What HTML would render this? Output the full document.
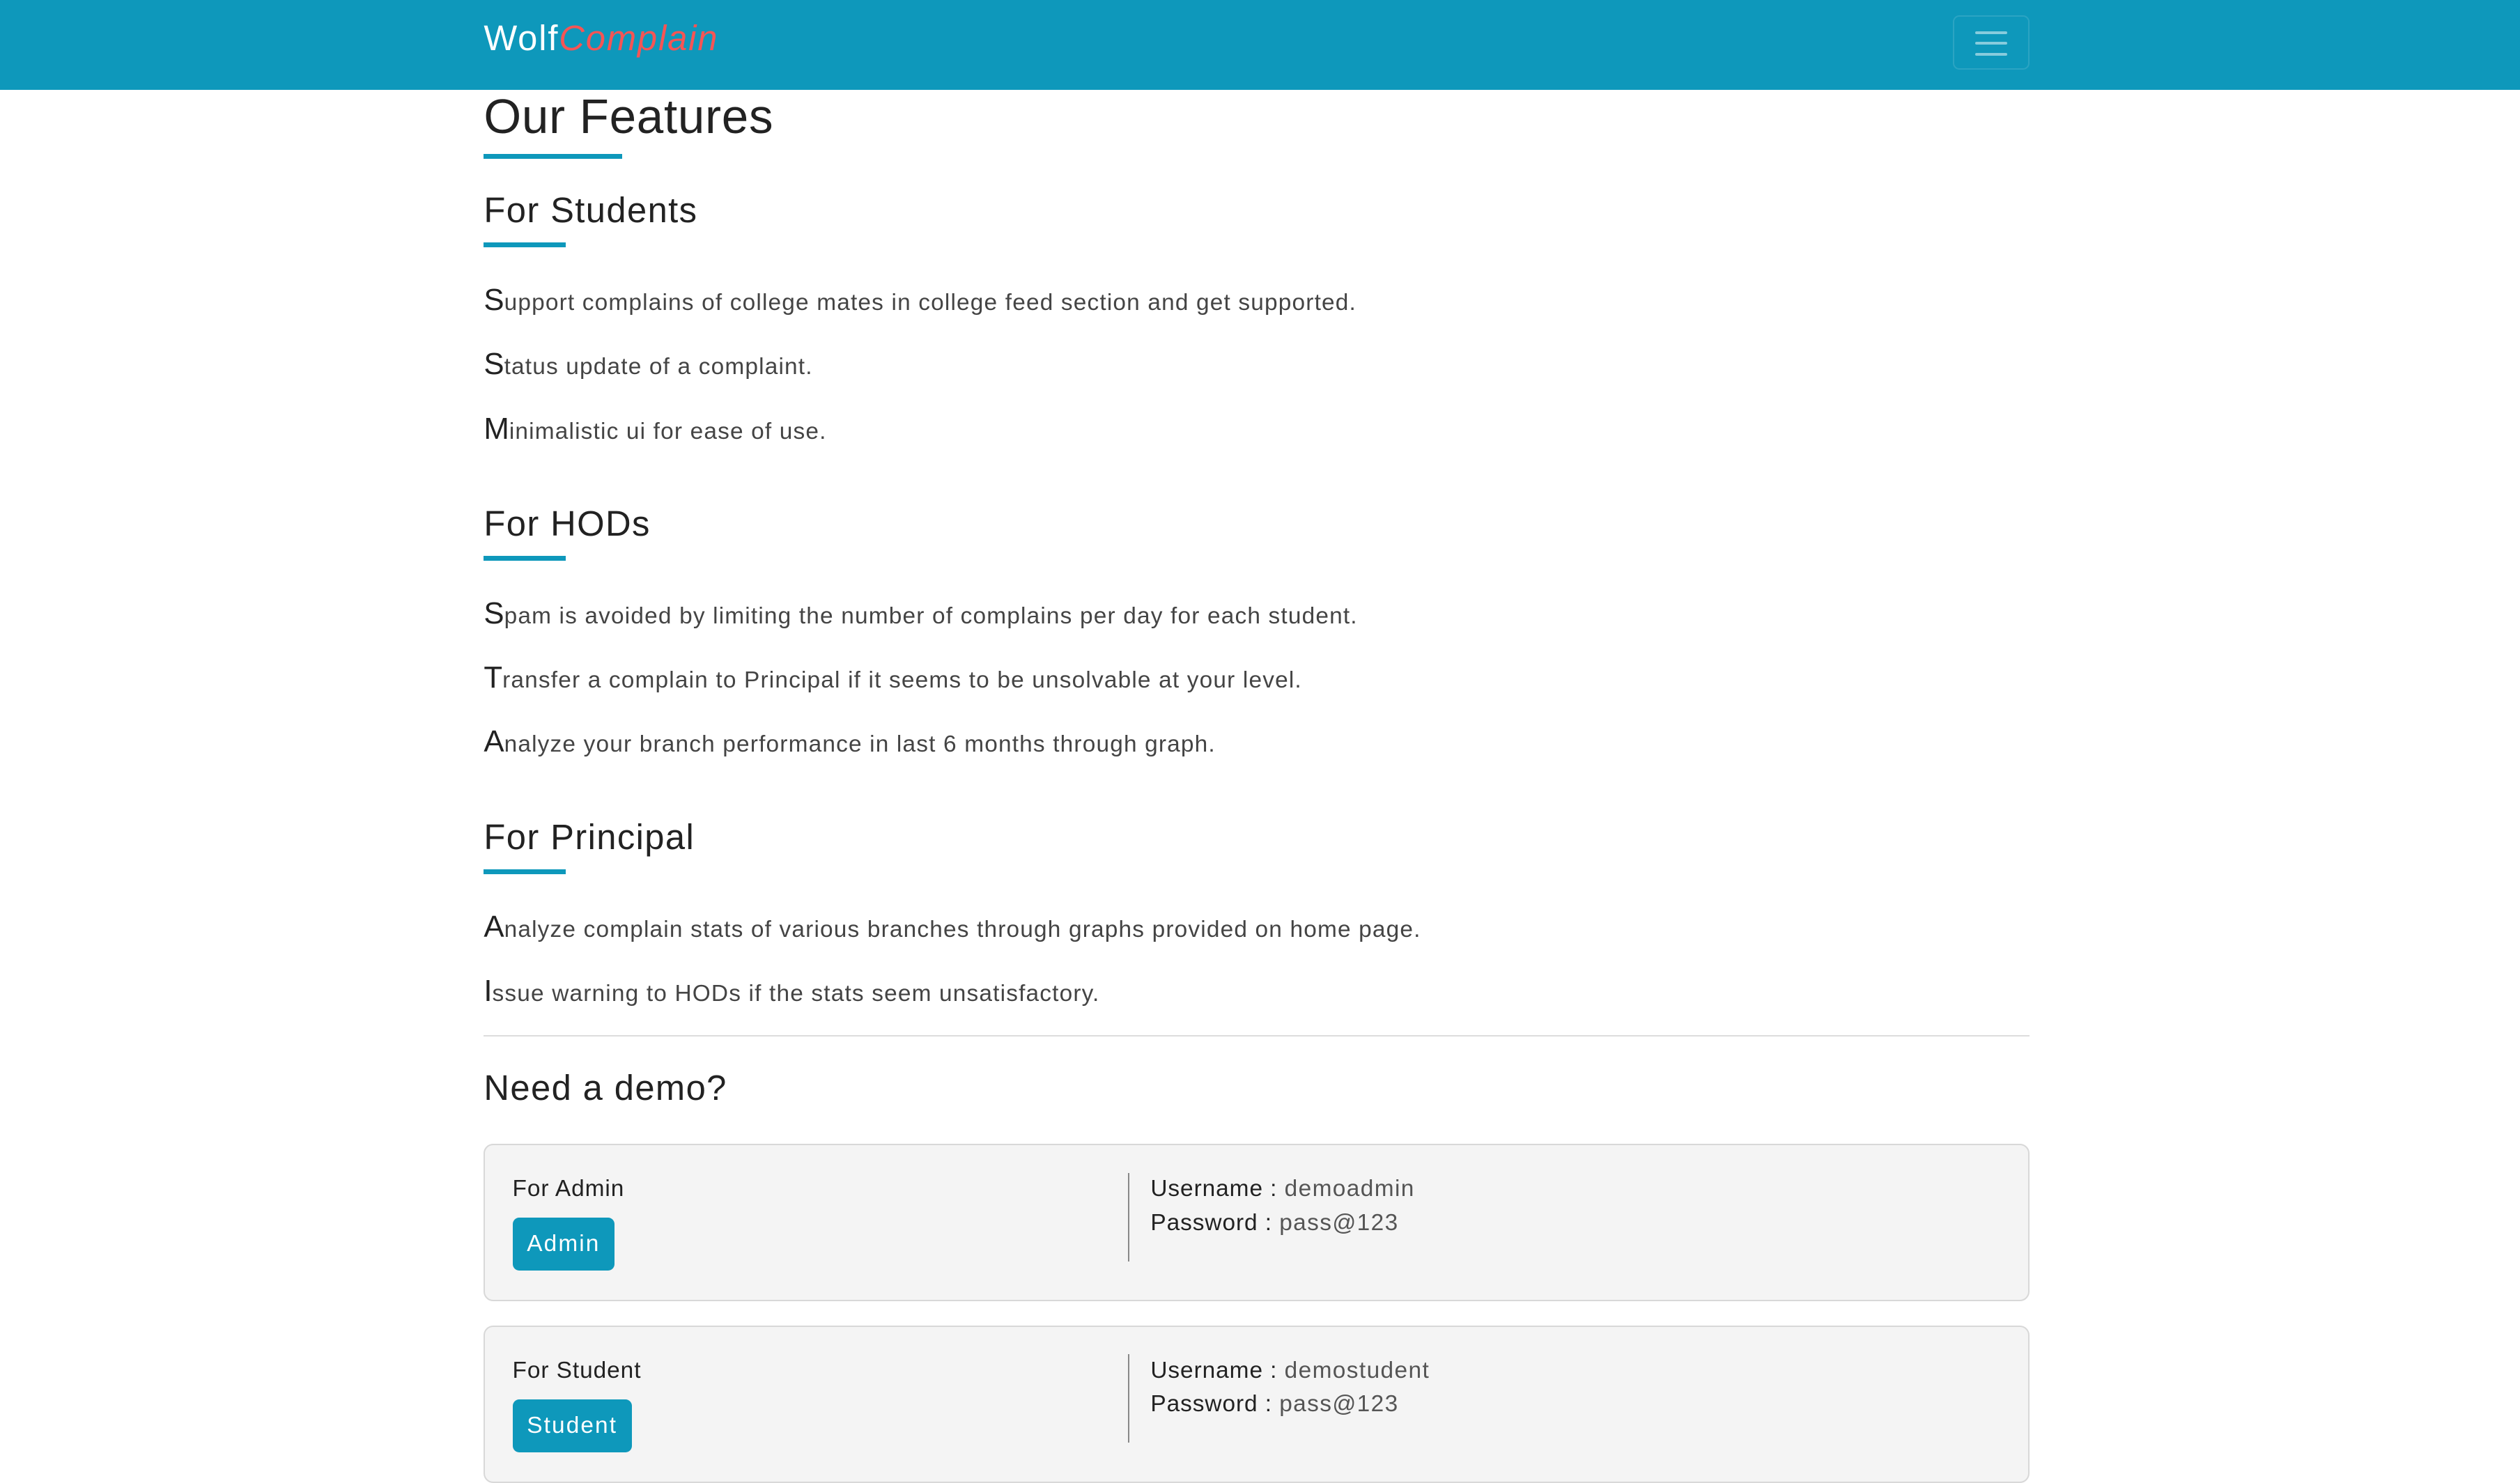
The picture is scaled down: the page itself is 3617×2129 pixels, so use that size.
<!DOCTYPE html>
<html><head><meta charset="utf-8"><style>
html,body{margin:0;padding:0;background:#fff;}
body{width:1568px;height:923px;overflow:hidden;position:relative;zoom:2.3068;font-family:"Liberation Sans",sans-serif;color:#222;}
.a{position:absolute;white-space:nowrap;}
.nav{position:absolute;left:0;top:0;width:1568px;height:56px;background:#0e98bb;}
.tog{position:absolute;left:1215px;top:9.5px;width:46px;height:32px;border:1px solid rgba(255,255,255,0.12);border-radius:4px;}
.ln{position:absolute;left:13px;width:20px;height:2px;border-radius:1px;background:rgba(255,255,255,0.5);}
.ul{position:absolute;left:301px;height:3px;background:#0e98bb;}
h2{margin:0;font-weight:400;font-size:22px;color:#222;letter-spacing:0.6px;}
.p{font-size:14.5px;color:#444;letter-spacing:0.5px;}
.p b{font-weight:400;font-size:19px;color:#222;letter-spacing:0;}
.card{position:absolute;left:301px;width:960px;height:96px;background:#f4f4f4;border:1px solid #d8d8d8;border-radius:6px;}
.btn{position:absolute;left:17px;top:45px;height:33px;line-height:33px;padding:0 9px;background:#0e98bb;color:#fff;border-radius:4px;font-size:14.5px;letter-spacing:0.9px;}
.vd{position:absolute;left:400px;top:17px;width:1px;height:55px;background:#888;}
.k{font-weight:400;color:#222;font-size:14.5px;letter-spacing:0.4px;}
.k span{color:#555;letter-spacing:0.6px;}
</style></head><body>
<div class="nav">
 <div class="a" style="left:301px;top:11px;font-size:22px;color:#fff;letter-spacing:0.8px;">Wolf<i style="color:#f55555;">Complain</i></div>
 <div class="tog"><div class="ln" style="top:9px"></div><div class="ln" style="top:15.5px"></div><div class="ln" style="top:22.5px"></div></div>
</div>
<div class="a" style="left:301px;top:55px;font-size:30px;color:#222;letter-spacing:0.3px;">Our Features</div>
<div class="ul" style="top:96px;width:86px;"></div>

<div class="a" style="left:301px;top:118px;"><h2>For Students</h2></div>
<div class="ul" style="top:151px;width:51px;"></div>
<div class="a p" style="left:301px;top:176px;"><b>S</b>upport complains of college mates in college feed section and get supported.</div>
<div class="a p" style="left:301px;top:216px;"><b>S</b>tatus update of a complaint.</div>
<div class="a p" style="left:301px;top:256px;"><b>M</b>inimalistic ui for ease of use.</div>

<div class="a" style="left:301px;top:313px;"><h2>For HODs</h2></div>
<div class="ul" style="top:346px;width:51px;"></div>
<div class="a p" style="left:301px;top:371px;"><b>S</b>pam is avoided by limiting the number of complains per day for each student.</div>
<div class="a p" style="left:301px;top:411px;"><b>T</b>ransfer a complain to Principal if it seems to be unsolvable at your level.</div>
<div class="a p" style="left:301px;top:451px;"><b>A</b>nalyze your branch performance in last 6 months through graph.</div>

<div class="a" style="left:301px;top:508px;"><h2>For Principal</h2></div>
<div class="ul" style="top:541px;width:51px;"></div>
<div class="a p" style="left:301px;top:566px;"><b>A</b>nalyze complain stats of various branches through graphs provided on home page.</div>
<div class="a p" style="left:301px;top:606px;"><b>I</b>ssue warning to HODs if the stats seem unsatisfactory.</div>

<div class="a" style="left:301px;top:644px;width:962px;height:1px;background:#ddd;"></div>
<div class="a" style="left:301px;top:664px;"><h2>Need a demo?</h2></div>

<div class="card" style="top:712px;">
 <div class="a k" style="left:17px;top:19px;">For Admin</div>
 <div class="btn">Admin</div>
 <div class="vd"></div>
 <div class="a k" style="left:414px;top:19px;">Username : <span>demoadmin</span></div>
 <div class="a k" style="left:414px;top:40px;">Password : <span>pass@123</span></div>
</div>
<div class="card" style="top:825px;">
 <div class="a k" style="left:17px;top:19px;">For Student</div>
 <div class="btn">Student</div>
 <div class="vd"></div>
 <div class="a k" style="left:414px;top:19px;">Username : <span>demostudent</span></div>
 <div class="a k" style="left:414px;top:40px;">Password : <span>pass@123</span></div>
</div>
</body></html>
